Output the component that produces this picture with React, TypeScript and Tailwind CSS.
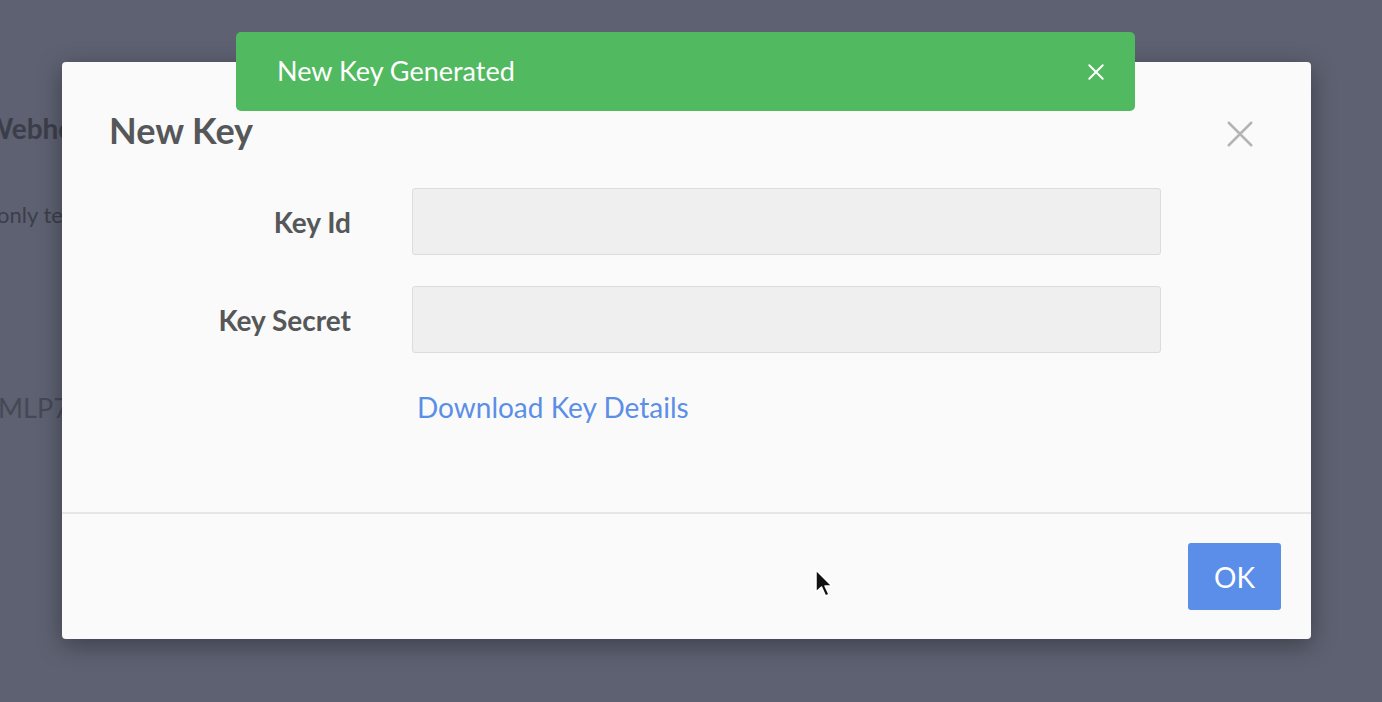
import React from 'react';

function Cursor() {
  return (
    <svg width="22" height="32" viewBox="0 0 22 32" className="absolute left-[814px] top-[568px]">
      <path d="M2 2 L2 24 L7.5 19 L11.5 28 L15 26.5 L11 18 L18 18 Z" fill="#111" stroke="#fff" strokeWidth="1.5" strokeLinejoin="round" />
    </svg>
  );
}

function CloseIcon({ size, stroke, width }: { size: number; stroke: string; width: number }) {
  return (
    <svg width={size} height={size} viewBox="0 0 24 24" fill="none" stroke={stroke} strokeWidth={width} strokeLinecap="round">
      <path d="M3 3 L21 21 M21 3 L3 21" />
    </svg>
  );
}

export default function App() {
  return (
    <div className="relative w-[1382px] h-[702px] overflow-hidden bg-[#5d6171] font-['Lato','Noto_Sans',sans-serif]">
      {/* page behind the overlay */}
      <div className="flex flex-col text-[#3b3e4a]">
        <div className="h-[110px]" />
        <div className="-ml-[16px] text-[28px] font-bold leading-[36px]">Webhooks</div>
        <div className="h-[54px]" />
        <div className="-ml-[3px] text-[22px] leading-[30px]">only test keys</div>
        <div className="h-[160px]" />
        <div className="-ml-[2px] text-[27px] leading-[36px] text-[#454956]">MLP7xx</div>
      </div>

      {/* modal */}
      <div className="absolute left-[62px] top-[62px] w-[1249px] h-[577px] bg-[#fafafa] rounded-[4px] shadow-[0_6px_24px_rgba(0,0,0,0.35)] flex flex-col">
        <div className="flex items-start justify-between pl-[47px] pr-[56px] pt-[46px]">
          <h2 className="text-[36px] leading-[44px] font-bold text-[#555759]">New Key</h2>
          <div className="mt-[11px]">
            <CloseIcon size={30} stroke="#b4b4b4" width={2} />
          </div>
        </div>

        <div className="flex flex-col gap-[31px] pl-[47px] mt-[36px]">
          <div className="flex items-center gap-[61px]">
            <label className="w-[242px] text-right text-[28px] font-bold text-[#555759]">Key Id</label>
            <div className="w-[749px] h-[67px] bg-[#efefef] border border-[#dcdcdc] rounded-[3px]" />
          </div>
          <div className="flex items-center gap-[61px]">
            <label className="w-[242px] text-right text-[28px] font-bold text-[#555759]">Key Secret</label>
            <div className="w-[749px] h-[67px] bg-[#efefef] border border-[#dcdcdc] rounded-[3px]" />
          </div>
        </div>

        <div className="pl-[355px] mt-[37px]">
          <a className="text-[28px] leading-[34px] text-[#5b8fe6]">Download Key Details</a>
        </div>

        <div className="mt-auto border-t-2 border-[#e6e6e6] flex justify-end pt-[29px] pb-[29px] pr-[30px]">
          <button className="w-[93px] h-[67px] bg-[#5a8ee9] text-white text-[28px] rounded-[3px]">OK</button>
        </div>
      </div>

      {/* toast */}
      <div className="absolute left-[236px] top-[32px] w-[899px] h-[79px] bg-[#51b960] rounded-[5px] flex items-center justify-between pl-[41px] pr-[30px]">
        <span className="text-[27px] text-white">New Key Generated</span>
        <CloseIcon size={18} stroke="#ffffff" width={2.6} />
      </div>

      <Cursor />
    </div>
  );
}
